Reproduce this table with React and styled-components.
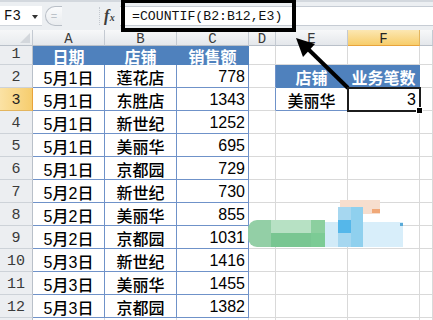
import React from "react";
import styled, { createGlobalStyle, css } from "styled-components";

const GlobalStyle = createGlobalStyle`
  html, body { margin: 0; padding: 0; background: #fff; }
  body { width: 433px; height: 320px; overflow: hidden; }
`;

const BLUE = "#4f81bd";
const BLUE_LINE = "#6f92c9";
const GRID = "#d9d9d9";

const Screen = styled.div`
  position: relative;
  width: 433px;
  height: 320px;
  overflow: hidden;
  background: #fff;
  font-family: "Liberation Sans", "Noto Sans CJK SC", sans-serif;
`;

const FormulaBar = styled.div`
  height: 30px;
  box-sizing: border-box;
  display: flex;
  align-items: center;
  background: #eceff2;
  border-top: 2px solid #d3d8de;
`;

const NameBox = styled.div`
  width: 42px;
  height: 20px;
  box-sizing: border-box;
  background: #fff;
  display: flex;
  align-items: center;
  justify-content: space-between;
  padding: 0 4px 0 4px;
  font-family: "Liberation Mono", monospace;
  font-size: 14px;
  color: #111;
  border-bottom: 1px solid #d0d5db;
`;

const DropArrow = styled.span`
  width: 0;
  height: 0;
  border-left: 3.5px solid transparent;
  border-right: 3.5px solid transparent;
  border-top: 4px solid #333;
  margin-top: 2px;
`;

const Knob = styled.div`
  width: 17px;
  height: 20px;
  margin-left: 3px;
  box-sizing: border-box;
  border: 1px solid #b9bfc7;
  border-right: none;
  border-radius: 10px 0 0 10px;
  background: linear-gradient(#fafbfc, #e9ecef);
  display: flex;
  align-items: center;
  justify-content: center;
  color: #bcc2c9;
  font-size: 11px;
  font-family: "Liberation Sans", sans-serif;
`;

const Grip = styled.div`
  width: 0;
  height: 18px;
  margin-left: 37px;
  border-left: 1px dotted #c3c8cf;
`;

const FxButton = styled.div`
  width: 16px;
  margin-left: 4px;
  font-family: "Liberation Serif", serif;
  font-style: italic;
  font-weight: 700;
  color: #3d3d3d;
  font-size: 16px;
  display: flex;
  align-items: baseline;
  & > small { font-size: 10px; margin-left: 0.5px; }
`;

const FormulaInput = styled.div`
  flex: 1;
  height: 20px;
  box-sizing: border-box;
  background: #fff;
  border-top: 1px solid #c6ccd4;
  border-bottom: 1px solid #c6ccd4;
  display: flex;
  align-items: center;
  padding-left: 12px;
  font-family: "Liberation Mono", monospace;
  font-size: 13.2px;
  color: #111;
  white-space: nowrap;
`;

const CalloutBox = styled.div`
  position: absolute;
  left: 121px;
  top: -1px;
  width: 175px;
  height: 33px;
  box-sizing: border-box;
  border: 4px solid #000;
  pointer-events: none;
`;

const Sheet = styled.div`
  display: grid;
  grid-template-columns: 33px 72px 72px 72px 27px 72px 72px 13px;
  grid-template-rows: 16px 19px repeat(12, 23px);
`;

const Corner = styled.div`
  position: relative;
  box-sizing: border-box;
  background: linear-gradient(#f6f7f8, #e8ebee);
  border-right: 1px solid #c4cad2;
  border-bottom: 1px solid #b9c0c9;
  &::after {
    content: "";
    position: absolute;
    right: 2px;
    bottom: 2px;
    width: 0;
    height: 0;
    border-left: 10px solid transparent;
    border-bottom: 10px solid #d3d7dc;
  }
`;

const ColHeader = styled.div`
  box-sizing: border-box;
  display: flex;
  align-items: center;
  justify-content: center;
  padding-top: 2px;
  font-family: "Liberation Mono", monospace;
  font-size: 14px;
  color: #3a3a3a;
  border-right: 1px solid #c4cad2;
  border-bottom: 1px solid #b9c0c9;
  background: linear-gradient(#f7f8f9, #e4e7eb);
  ${(p) =>
    p.$active &&
    css`
      background: linear-gradient(#fce7b2, #f7cd6b);
      border-bottom: 1px solid #e8a33b;
      border-right: 1px solid #e3b55e;
      color: #222;
    `}
`;

const RowHeader = styled.div`
  box-sizing: border-box;
  display: flex;
  align-items: flex-end;
  justify-content: center;
  padding-bottom: 2px;
  font-family: "Liberation Mono", monospace;
  font-size: 15px;
  line-height: 15px;
  color: #3a3a3a;
  border-right: 1px solid #b9c0c9;
  border-bottom: 1px solid #cdd2d8;
  background: #eceef1;
  ${(p) =>
    p.$active &&
    css`
      background: linear-gradient(to right, #fbe2a4, #f6cd6e);
      border-right: 1px solid #e8a33b;
      border-bottom: 1px solid #e3b55e;
      color: #222;
    `}
`;

const justify = { left: "flex-start", center: "center", right: "flex-end" };

const Cell = styled.div`
  position: relative;
  box-sizing: border-box;
  display: flex;
  align-items: center;
  justify-content: ${(p) => justify[p.$align || "center"]};
  padding: 1px 3px 0 3px;
  font-size: 16px;
  font-weight: 500;
  white-space: nowrap;
  color: #000;
  background: #fff;
  border-right: 1px solid ${(p) => p.$rc || GRID};
  border-bottom: 1px solid ${(p) => p.$bc || GRID};
  ${(p) =>
    p.$tone === "head" &&
    css`
      background: ${BLUE};
      color: #fff;
      font-weight: 700;
      border-right-color: ${BLUE};
      border-bottom-color: ${BLUE};
    `}
  ${(p) =>
    p.$tone === "body" &&
    css`
      border-right-color: ${BLUE_LINE};
      border-bottom-color: ${BLUE_LINE};
    `}
  ${(p) =>
    p.$selected &&
    css`
      z-index: 2;
      outline: 2px solid #1c1c1c;
      outline-offset: -1px;
      &::after {
        content: "";
        position: absolute;
        right: -4px;
        bottom: -4px;
        width: 5px;
        height: 5px;
        background: #000;
        border: 1px solid #fff;
      }
    `}
`;

const Overlay = styled.svg`
  position: absolute;
  left: 0;
  top: 0;
  pointer-events: none;
`;

const data = [
  ["5月1日", "莲花店", "778"],
  ["5月1日", "东胜店", "1343"],
  ["5月1日", "新世纪", "1252"],
  ["5月1日", "美丽华", "695"],
  ["5月1日", "京都园", "729"],
  ["5月2日", "新世纪", "730"],
  ["5月2日", "美丽华", "855"],
  ["5月2日", "京都园", "1031"],
  ["5月3日", "新世纪", "1416"],
  ["5月3日", "美丽华", "1455"],
  ["5月3日", "京都园", "1382"],
];

const letters = ["A", "B", "C", "D", "E", "F", ""];

function renderRow(r) {
  const cells = [];
  cells.push(
    <RowHeader key={`h${r}`} $active={r === 3}>
      {r <= 12 ? r : ""}
    </RowHeader>
  );
  if (r === 1) {
    cells.push(<Cell key="a" $tone="head">日期</Cell>);
    cells.push(<Cell key="b" $tone="head">店铺</Cell>);
    cells.push(<Cell key="c" $tone="head" $rc={BLUE_LINE}>销售额</Cell>);
  } else if (r <= 12) {
    const [d, s, n] = data[r - 2];
    cells.push(<Cell key="a" $tone="body">{d}</Cell>);
    cells.push(<Cell key="b" $tone="body">{s}</Cell>);
    cells.push(<Cell key="c" $tone="body" $align="right">{n}</Cell>);
  } else {
    cells.push(<Cell key="a" />, <Cell key="b" />, <Cell key="c" />);
  }
  cells.push(<Cell key="d" $rc={r === 2 || r === 3 ? BLUE_LINE : undefined} />);
  if (r === 2) {
    cells.push(<Cell key="e" $tone="head">店铺</Cell>);
    cells.push(<Cell key="f" $tone="head">业务笔数</Cell>);
  } else if (r === 3) {
    cells.push(<Cell key="e" $tone="body">美丽华</Cell>);
    cells.push(
      <Cell key="f" $tone="body" $align="right" $selected>
        3
      </Cell>
    );
  } else {
    cells.push(<Cell key="e" />, <Cell key="f" />);
  }
  cells.push(<Cell key="g" />);
  return cells;
}

export default function App() {
  const rowsIdx = Array.from({ length: 13 }, (_, i) => i + 1);
  return (
    <Screen>
      <GlobalStyle />
      <FormulaBar>
        <NameBox>
          F3
          <DropArrow />
        </NameBox>
        <Knob>=</Knob>
        <Grip />
        <FxButton>
          f<small>x</small>
        </FxButton>
        <FormulaInput>=COUNTIF(B2:B12,E3)</FormulaInput>
      </FormulaBar>
      <CalloutBox />
      <Sheet>
        <Corner />
        {letters.map((l, i) => (
          <ColHeader key={`c${i}`} $active={l === "F"}>
            {l}
          </ColHeader>
        ))}
        {rowsIdx.map((r) => renderRow(r))}
      </Sheet>
      <Overlay width="433" height="320" viewBox="0 0 433 320">
        <line x1="348" y1="88" x2="306" y2="47" stroke="#000" strokeWidth="4" />
        <polygon points="296,38 315,44 303,57" fill="#000" />
        <g>
          <rect x="340" y="200" width="40" height="14" fill="#f7dece" />
          <rect x="372" y="209" width="8" height="4" fill="#f0a878" />
          <rect x="248" y="220" width="80" height="27" rx="9" fill="#93cfa6" />
          <rect x="271" y="220" width="40" height="13" fill="#b7e1c4" />
          <rect x="271" y="233" width="40" height="14" fill="#79c692" />
          <rect x="311" y="220" width="14" height="13" fill="#8ccf9f" />
          <rect x="311" y="233" width="14" height="14" fill="#7ccb95" />
          <rect x="325" y="222" width="78" height="25" fill="#d2ebf8" />
          <rect x="338" y="207" width="13" height="40" fill="#a6d7f0" />
          <rect x="351" y="207" width="12" height="40" fill="#8fd0ee" />
          <rect x="338" y="220" width="13" height="13" fill="#55b7ea" />
          <rect x="363" y="222" width="40" height="25" fill="#d8eefa" />
          <rect x="400" y="223" width="3" height="3" fill="#5aaad8" />
        </g>
      </Overlay>
    </Screen>
  );
}
